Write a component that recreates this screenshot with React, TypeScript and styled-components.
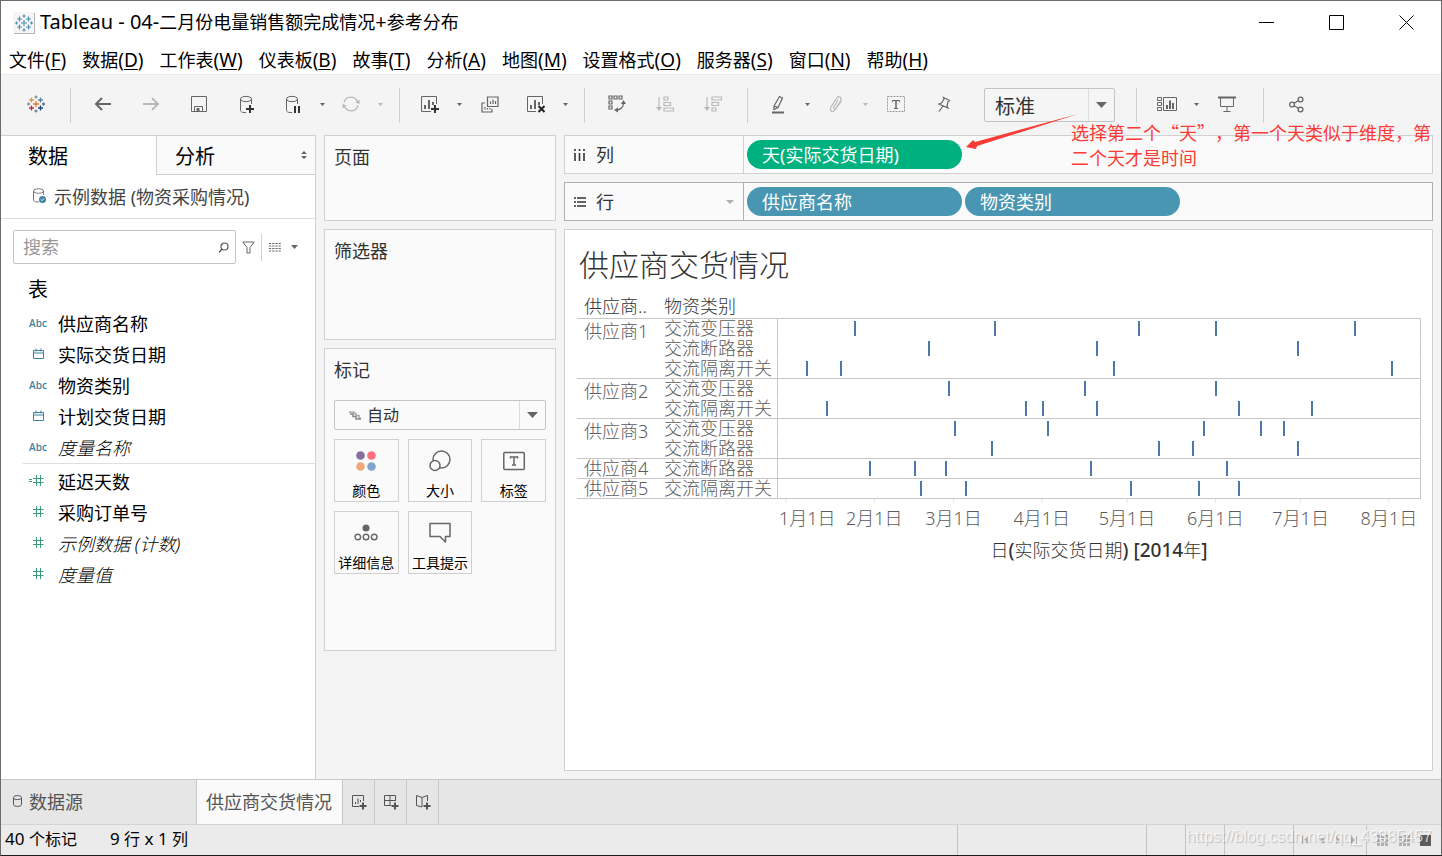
import React from "react";
import styled, { createGlobalStyle, css } from "styled-components";

const uiFont = `"Noto Sans", "Noto Sans CJK SC", sans-serif`;
const cjkFont = `"Noto Sans CJK SC", sans-serif`;
const line = "#d0d0d0";
const ink = "#333333";
const iconInk = "#666666";
const faint = "#b8b8b8";

const Global = createGlobalStyle`
  *, *::before, *::after { box-sizing: border-box; }
  body { margin: 0; background: #f4f4f4; }
  body, button, input, select { font-family: ${uiFont}; font-size: 18px; color: #000; }
  button { border: 0; padding: 0; background: none; }
  svg { display: block; flex: none; }
`;

const Window = styled.div`
  display: flex;
  flex-direction: column;
  min-height: 100vh;
  border: 1px solid #6b6b6b;
  border-bottom-color: #1c1c1c;
  background: #f4f4f4;
`;

const Latin = styled.span<{ $size: number }>`
  font-size: ${(p) => p.$size}px;
`;

/* ---------- title bar and menu ---------- */

const TitleBar = styled.header`
  display: flex;
  align-items: center;
  height: 43px;
  padding-left: 12px;
  background: #fff;
`;

const AppIcon = styled.span`
  display: flex;
  align-items: center;
  justify-content: center;
  width: 21px;
  height: 21px;
  margin-right: 6px;
  background: #f6f6f6;
  box-shadow: 1px 1px 0 #b5b5b5;
`;

const Title = styled.h1`
  flex: 1;
  margin: 0;
  padding-bottom: 2px;
  font-size: 18px;
  font-weight: 400;
  line-height: 24px;
`;

const WindowButton = styled.button`
  display: flex;
  align-items: center;
  justify-content: center;
  width: 70px;
  height: 43px;
`;

const MenuBar = styled.nav`
  display: flex;
  height: 30px;
  background: #fff;
`;

const MenuItem = styled.button`
  padding: 2px 8px 0;
  line-height: 28px;
  white-space: nowrap;
  u { text-underline-offset: 2px; text-decoration-thickness: 1px; }
`;

/* ---------- toolbar ---------- */

const Toolbar = styled.div`
  display: flex;
  align-items: center;
  height: 61px;
  border-top: 1px solid #ececec;
`;

const ToolGroup = styled.div<{ $end?: number; $first?: boolean }>`
  display: flex;
  align-items: center;
  height: 35px;
  padding: 0 ${(p) => p.$end ?? 12}px 0 ${(p) => (p.$first ? 11 : 8)}px;
  border-left: ${(p) => (p.$first ? "0" : "1px solid #cfcfcf")};
`;

const Tool = styled.button<{ $narrow?: boolean; $dim?: boolean }>`
  display: flex;
  align-items: center;
  justify-content: center;
  width: ${(p) => (p.$narrow ? 44 : 48)}px;
  height: 35px;
  padding-bottom: 2px;
  color: ${(p) => (p.$dim ? faint : iconInk)};
`;

const CaretButton = styled.button<{ $dim?: boolean }>`
  display: flex;
  align-items: center;
  justify-content: center;
  width: 14px;
  height: 35px;
  padding-bottom: 2px;
  color: ${(p) => (p.$dim ? faint : iconInk)};
`;

const SelectBox = styled.div<{ $size: "large" | "small" }>`
  display: flex;
  align-items: center;
  position: relative;
  border: 1px solid #c4c4c4;
  border-radius: 2px;
  background: ${(p) => (p.$size === "large" ? "#f5f5f5" : "#fafafa")};
  height: ${(p) => (p.$size === "large" ? 34 : 30)}px;
  ${(p) => p.$size === "large" && css`width: 131px; margin: 0 21px 0 4px;`}
  select {
    flex: 1;
    min-width: 0;
    height: 100%;
    border: 0;
    appearance: none;
    background: none;
    color: ${ink};
    font-size: ${(p) => (p.$size === "large" ? 20 : 16)}px;
    padding: ${(p) => (p.$size === "large" ? "2px 0 0 10px" : "0 0 0 6px")};
  }
`;

const SelectArrow = styled.span`
  display: flex;
  align-items: center;
  justify-content: center;
  width: 26px;
  height: 100%;
  border-left: 1px solid #dcdcdc;
  color: #666;
  pointer-events: none;
`;

/* ---------- data pane ---------- */

const Main = styled.main`
  display: flex;
  flex: 1;
`;

const DataPane = styled.aside`
  width: 315px;
  flex: none;
  background: #fff;
  border-top: 1px solid ${line};
  border-right: 1px solid ${line};
`;

const PaneTabs = styled.div`
  display: flex;
  height: 39px;
`;

const PaneTab = styled.button<{ $active?: boolean }>`
  display: flex;
  align-items: center;
  justify-content: space-between;
  font-size: 20px;
  ${(p) =>
    p.$active
      ? css`width: 155px; padding-left: 27px;`
      : css`
          flex: 1;
          padding: 0 7px 0 18px;
          background: #fafafa;
          border-left: 1px solid ${line};
          border-bottom: 1px solid ${line};
        `}
`;

const Source = styled.div`
  display: flex;
  align-items: center;
  gap: 7px;
  height: 44px;
  padding: 0 0 2px 32px;
  color: #444;
  border-bottom: 1px solid #dedede;
`;

const SearchRow = styled.div`
  display: flex;
  align-items: center;
  margin: 11px 16px 0 12px;
`;

const SearchField = styled.label`
  display: flex;
  align-items: center;
  flex: 1;
  min-width: 0;
  height: 34px;
  padding: 0 6px 0 9px;
  border: 1px solid #c4c4c4;
  border-radius: 2px;
  color: #555;
  input {
    flex: 1;
    min-width: 0;
    border: 0;
    padding: 0;
    outline: 0;
    background: none;
  }
  input::placeholder { color: #979797; opacity: 1; }
`;

const SmallTool = styled.button<{ $divided?: boolean }>`
  display: flex;
  align-items: center;
  justify-content: center;
  gap: 10px;
  flex: none;
  width: ${(p) => (p.$divided ? 38 : 25)}px;
  height: 27px;
  color: #666;
  padding-left: ${(p) => (p.$divided ? 6 : 0)}px;
  border-left: ${(p) => (p.$divided ? `1px solid ${line}` : "0")};
`;

const TablesHeading = styled.h2`
  margin: 12px 0 4px 27px;
  font-size: 20px;
  font-weight: 400;
  line-height: 28px;
`;

const FieldList = styled.ul<{ $measures?: boolean }>`
  list-style: none;
  margin: 0 0 0 22px;
  padding: ${(p) => (p.$measures ? "2px 0 0" : "0")};
  border-top: ${(p) => (p.$measures ? "1px solid #dedede" : "0")};
`;

const Field = styled.li<{ $italic?: boolean }>`
  display: flex;
  align-items: center;
  height: 31px;
  padding-bottom: 2px;
  font-style: ${(p) => (p.$italic ? "italic" : "normal")};
  font-weight: ${(p) => (p.$italic ? 300 : 400)};
`;

const FieldIcon = styled.span`
  display: flex;
  justify-content: center;
  width: 30px;
  margin-right: 5px;
  font: 600 10px "Open Sans", "Noto Sans", sans-serif;
  color: #3e82a0;
`;

/* ---------- cards ---------- */

const Cards = styled.section`
  display: flex;
  flex-direction: column;
  gap: 8px;
  width: 232px;
  flex: none;
  margin-left: 8px;
`;

const Card = styled.div<{ $height: number }>`
  min-height: ${(p) => p.$height}px;
  padding: 9px;
  border: 1px solid ${line};
  background: #fafafa;
`;

const CardTitle = styled.h2`
  margin: 0;
  font-size: 18px;
  font-weight: 400;
  line-height: 24px;
  color: ${ink};
`;

const MarkType = styled.div`
  margin: 18px 0 9px;
`;

const MarkGlyph = styled.span`
  margin-left: 14px;
`;

const MarkGrid = styled.div`
  display: grid;
  grid-template-columns: repeat(3, 1fr);
  gap: 9px;
`;

const MarkButton = styled.button`
  display: flex;
  flex-direction: column;
  align-items: center;
  height: 63px;
  padding-top: 9px;
  border: 1px solid ${line};
  font-size: 14px;
  line-height: 20px;
  white-space: nowrap;
  svg { margin-bottom: 8px; }
`;

/* ---------- shelves ---------- */

const Workspace = styled.section`
  position: relative;
  display: flex;
  flex-direction: column;
  gap: 8px;
  flex: 1;
  min-width: 0;
  margin: 0 8px;
`;

const Shelf = styled.div<{ $strong?: boolean }>`
  --edge: ${(p) => (p.$strong ? "#b0b0b0" : line)};
  display: flex;
  align-items: center;
  gap: 3px;
  height: 39px;
  border: 1px solid var(--edge);
  background: #fafafa;
`;

const ShelfLabel = styled.div`
  display: flex;
  align-items: center;
  gap: 10px;
  width: 179px;
  height: 37px;
  padding: 0 9px 0 8px;
  border-right: 1px solid var(--edge);
  color: ${ink};
  span { flex: 1; line-height: 24px; }
`;

const Pill = styled.button<{ $tone: "date" | "dimension" }>`
  width: 215px;
  height: 29px;
  padding-left: 15px;
  border-radius: 15px;
  text-align: left;
  line-height: 28px;
  color: #fff;
  background: ${(p) => (p.$tone === "date" ? "#00b180" : "#4996b2")};
`;

const Note = styled.div`
  position: absolute;
  left: 402px;
  right: 0;
  top: -23px;
  display: flex;
  svg { overflow: visible; }
`;

const NoteText = styled.p`
  margin: 8px 0 0;
  font-family: ${cjkFont};
  line-height: 25px;
  white-space: nowrap;
  text-spacing-trim: space-all;
  color: #fb3b35;
`;

/* ---------- view ---------- */

const View = styled.div`
  flex: 1;
  margin-bottom: 8px;
  padding: 12px 11px 12px 12px;
  border: 1px solid ${line};
  background: #fff;
`;

const ViewTitle = styled.h2`
  margin: 0 0 11px 2px;
  font-family: ${cjkFont};
  font-size: 30px;
  font-weight: 300;
  line-height: 42px;
  color: ${ink};
`;

const Grid = styled.table`
  width: 100%;
  table-layout: fixed;
  border-collapse: separate;
  border-spacing: 0;
  font-family: ${uiFont};
  font-weight: 300;
  line-height: 19px;
  white-space: nowrap;
  color: #5c5c5c;
  th, td { padding: 0; font-weight: 300; text-align: left; }
  thead th { height: 23px; padding-left: 7px; color: ${ink}; }
  tbody th, tbody td { border-top: 1px solid transparent; height: 20px; }
  tbody th { padding-left: 7px; }
  tbody tr:first-child th, tbody tr:first-child td { border-top-color: #c8c8c8; }
  tbody:last-of-type tr:last-child > * { border-bottom: 1px solid #c8c8c8; }
  tbody:last-of-type th { height: 21px; }
`;

const Supplier = styled.th<{ $group: boolean }>`
  vertical-align: top;
  line-height: ${(p) => (p.$group ? 25 : 19)}px;
`;

const Track = styled.td`
  border-left: 1px solid #c8c8c8;
  border-right: 1px solid #c8c8c8;
`;

const Axis = styled.svg`
  overflow: visible;
  text {
    font-family: ${uiFont};
    font-size: 18px;
    font-weight: 300;
    fill: #5c5c5c;
  }
`;

const AxisTitle = styled.div`
  text-align: center;
  line-height: 26px;
  font-weight: 300;
  color: ${ink};
  b { font-size: 19px; font-weight: 500; }
`;

/* ---------- bottom bars ---------- */

const SheetBar = styled.div`
  display: flex;
  height: 45px;
  border-top: 1px solid #c8c8c8;
  background: #e6e6e6;
`;

const SheetTab = styled.button<{ $kind: "source" | "active" | "new" }>`
  display: flex;
  align-items: center;
  gap: 7px;
  padding-bottom: 2px;
  border-right: 1px solid #c8c8c8;
  color: #555;
  ${(p) => p.$kind === "source" && css`width: 196px; padding-left: 12px;`}
  ${(p) => p.$kind === "active" && css`padding: 0 10px 2px 9px; background: #fafafa;`}
  ${(p) => p.$kind === "new" && css`width: 32px; padding: 0; justify-content: center;`}
`;

const StatusBar = styled.footer`
  position: relative;
  display: flex;
  align-items: center;
  gap: 33px;
  height: 31px;
  padding-left: 4px;
  border-top: 1px solid #d4d4d4;
  background: #ebebeb;
  font-size: 16px;
  line-height: 30px;
`;

const StatusText = styled.span`
  height: 30px;
  line-height: 28px;
`;

const StatusCells = styled.div`
  display: flex;
  height: 30px;
  margin-left: auto;
`;

const StatusCell = styled.div<{ $width: number }>`
  display: flex;
  align-items: center;
  justify-content: space-evenly;
  width: ${(p) => p.$width}px;
  border-left: 1px solid #c4c4c4;
  color: #b0b0b0;
`;

const Watermark = styled.span`
  position: absolute;
  right: 9px;
  top: 2px;
  font-family: "Liberation Sans", sans-serif;
  line-height: 20px;
  color: rgba(255, 255, 255, 0.7);
  text-shadow: 1px 1px 1px rgba(0, 0, 0, 0.2);
`;

/* ---------- icons ---------- */

const Svg = ({ w, h, children, sw = 1.5 }: { w: number; h: number; sw?: number; children: React.ReactNode }) => (
  <svg width={w} height={h} viewBox={`0 0 ${w} ${h}`} fill="none" stroke="currentColor" strokeWidth={sw} aria-hidden="true">
    {children}
  </svg>
);

const Caret = ({ size = 5 }: { size?: number }) => (
  <svg width={size} height={Math.ceil(size / 2)} viewBox="0 0 10 6" preserveAspectRatio="none" fill="currentColor" aria-hidden="true">
    <path d="M0 0h10L5 6z" />
  </svg>
);

const crosses: [number, number, number, string][] = [
  [9, 9, 3, "#e8762d"],
  [4.5, 5, 2.5, "#e8963d"],
  [13.5, 5, 2.5, "#5b879b"],
  [4.5, 13, 2.5, "#c1283c"],
  [13.5, 13, 2.5, "#1f447e"],
  [9, 2, 1.5, "#7199a6"],
  [9, 16, 1.5, "#6b7fa3"],
  [1.5, 9, 1.5, "#7199a6"],
  [16.5, 9, 1.5, "#5b6591"],
];

const Logo = ({ mono }: { mono?: boolean }) => (
  <svg width="18" height="18" viewBox="0 0 18 18" strokeWidth={mono ? 1.2 : 1.3} aria-hidden="true">
    {crosses.map(([x, y, r, c]) => (
      <path key={`${x}-${y}`} d={`M${x - r} ${y}h${2 * r}M${x} ${y - r}v${2 * r}`} stroke={mono ? "#4b8fb3" : c} />
    ))}
  </svg>
);

const Plus = ({ x, y }: { x: number; y: number }) => (
  <path d={`M${x - 4} ${y}h8M${x} ${y - 4}v8`} stroke="#333" strokeWidth="2" />
);

const Cylinder = () => (
  <path d="M7 17.500H5c-2 0-3.500-1-3.500-2V4M12.500 4v5M1.500 4c0-3.500 11-3.500 11 0s-11 3.500-11 0z" />
);

const icons = {
  back: <Svg w={18} h={14} sw={2}><path d="M17 7H2M8 1L2 7l6 6" /></Svg>,
  forward: <Svg w={18} h={14} sw={1.8}><path d="M1 7h15M10 1l6 6-6 6" /></Svg>,
  save: <Svg w={16} h={16} sw={1}><path d="M.5.5h15v15H.5zM3.500 15v-4.500h8V15" /><path d="M5.500 12h3v3h-3z" fill="currentColor" stroke="none" /></Svg>,
  addData: <Svg w={16} h={19} sw={1}><Cylinder /><Plus x={11} y={14} /></Svg>,
  pauseData: <Svg w={16} h={19} sw={1}><Cylinder /><path d="M10 11v7M14 11v7" stroke="#333" strokeWidth="2" /></Svg>,
  refresh: <Svg w={18} h={16} sw={1.2}><path d="M2 6.500C4-.5 13-.5 15.500 6M16 9.500c-2 7-11 7-13.500.5" /><path d="M17.500 3.500V8l-4-1.500zM.5 12.500V8l4 1.500z" fill="currentColor" stroke="none" /></Svg>,
  newSheet: <Svg w={20} h={18} sw={1}><path d="M16.500 9V1.500H1.500v15H11" /><path d="M5 14v-4M9 14V5M13 10V7" strokeWidth="2" /><Plus x={15} y={14} /></Svg>,
  duplicate: <Svg w={18} h={17} sw={1.2}><path d="M6.500 1h10.500v9.500H6.500zM4 7H1v9h10v-3M9.500 8V5.500M12 8V3.500M14.500 8V5M4 13.500V11M6.500 13.500V12M9 13.500V12" /></Svg>,
  clearSheet: <Svg w={20} h={18} sw={1}><path d="M16.500 9V1.500H1.500v15H10" /><path d="M5 14v-4M9 14V5M13 10V7" strokeWidth="2" /><path d="M12.500 11l6 6M18.500 11l-6 6" stroke="#222" strokeWidth="2" /></Svg>,
  swap: <Svg w={18} h={18} sw={1.2}><path d="M1 1h3v3H1zM6 1h3v3H6zM11 1h3v3h-3zM1 6h3v3H1zM1 11h3v3H1zM15.500 8c0 4-3 7-7 7" /><path d="M13 9l2.500-4L18 9zM10 12.500L6 15l4 2.500z" fill="currentColor" stroke="none" /></Svg>,
  sortAsc: <Svg w={18} h={16} sw={1.2}><path d="M3 1v11M8 1h4v3H8zM8 6.500h6.500v3H8zM8 12h9.500v3H8z" /><path d="M0 11h6l-3 4z" fill="currentColor" stroke="none" /></Svg>,
  sortDesc: <Svg w={18} h={16} sw={1.2}><path d="M3 1v11M8 1h9.500v3H8zM8 6.500h6.500v3H8zM8 12h4v3H8z" /><path d="M0 11h6l-3 4z" fill="currentColor" stroke="none" /></Svg>,
  highlight: <Svg w={14} h={19} sw={1.2}><path d="M3 11L8.500 1.500l3 1.500-4.500 9.500L3 14.500zM3 11l4 1.500" /><path d="M1 17.500h12" strokeWidth="2" /></Svg>,
  clip: <Svg w={14} h={18} sw={1.2}><path d="M9 5l-4 7c-1 2 1 3 2 1.500L11.500 6c2-4-2-6-4-2.500L2 12c-2 4 2 6 4 3L12.500 6" /></Svg>,
  label: <Svg w={18} h={16} sw={1}><path d="M.5.5h17v15H.5z" stroke="#999" strokeDasharray="2 1" /><path d="M5.500 6V4.500h7V6M7 12.500h4" /><path d="M9 4.500v8" strokeWidth="1.500" /></Svg>,
  pin: <Svg w={14} h={17} sw={1.2}><path d="M6.500 1.500l6 3-1.500 1-1 4.500 1 2L2 8l2.500-1L7 3zM6 10l-4 5.500" /></Svg>,
  showMe: <Svg w={20} h={15} sw={1}><path d="M.5.5h4v3h-4zM.5 5.500h4v3h-4zM.5 10.500h4v3h-4zM6.500.5h13v13h-13z" /><path d="M10 12V8M13 12V3.500M16 12V6" strokeWidth="2" /></Svg>,
  present: <Svg w={18} h={16} sw={1}><path d="M0 1.500h18" strokeWidth="2" /><path d="M2.500 2v8.500h13V2M9 10.500v4.500M5.500 15.500h7" /></Svg>,
  share: <Svg w={15} h={17} sw={1.3}><circle cx="3" cy="8.500" r="2.400" /><circle cx="11.500" cy="3.500" r="2.400" /><circle cx="11.500" cy="13.500" r="2.400" /><path d="M5.200 7.200l4-2.400M5.200 9.800l4 2.400" /></Svg>,
};

const calendar = <Svg w={11} h={11} sw={1}><path d="M.5 2.500h10v8H.5zM.5 5h10M3 .5v3M8 .5v3" /></Svg>;
const hash = (calc?: boolean) => (
  <svg width="18" height="11" viewBox="0 0 18 11" stroke="#3c9c78" fill="none" aria-hidden="true">
    <path d="M7.500 0v11M11.500 0v11M4 3.500h10.500M4 7.500h10.500" />
    {calc && <path d="M0 4.500h3M0 6.500h3" />}
  </svg>
);

/* ---------- data ---------- */

const menus = [
  ["文件", "F"], ["数据", "D"], ["工作表", "W"], ["仪表板", "B"], ["故事", "T"], ["分析", "A"],
  ["地图", "M"], ["设置格式", "O"], ["服务器", "S"], ["窗口", "N"], ["帮助", "H"],
];

const dimensions = [
  { name: "供应商名称", icon: "Abc" },
  { name: "实际交货日期", icon: calendar },
  { name: "物资类别", icon: "Abc" },
  { name: "计划交货日期", icon: calendar },
  { name: "度量名称", icon: "Abc", italic: true },
];

const measures = [
  { name: "延迟天数", icon: hash(true) },
  { name: "采购订单号", icon: hash() },
  { name: "示例数据 (计数)", icon: hash(), italic: true },
  { name: "度量值", icon: hash(), italic: true },
];

const span = 642;
const pct = (v: number) => `${(v / span) * 100}%`;

const suppliers = [
  {
    name: "供应商1",
    rows: [
      { category: "交流变压器", marks: [77, 217, 361, 438, 577] },
      { category: "交流断路器", marks: [151, 319, 520] },
      { category: "交流隔离开关", marks: [29, 63, 336, 614] },
    ],
  },
  {
    name: "供应商2",
    rows: [
      { category: "交流变压器", marks: [171, 307, 438] },
      { category: "交流隔离开关", marks: [49, 248, 265, 319, 461, 534] },
    ],
  },
  {
    name: "供应商3",
    rows: [
      { category: "交流变压器", marks: [177, 270, 426, 483, 506] },
      { category: "交流断路器", marks: [214, 381, 415, 520] },
    ],
  },
  { name: "供应商4", rows: [{ category: "交流断路器", marks: [92, 137, 168, 313, 449] }] },
  { name: "供应商5", rows: [{ category: "交流隔离开关", marks: [143, 188, 353, 421, 461] }] },
];

const ticks = [9, 97, 176, 264, 349, 437, 522, 610];

/* ---------- parts ---------- */

const DropTool = ({ label, icon, dim }: { label: string; icon: React.ReactNode; dim?: boolean }) => (
  <>
    <Tool $narrow $dim={dim} aria-label={label}>{icon}</Tool>
    <CaretButton $dim={dim} aria-label={`${label}选项`}><Caret /></CaretButton>
  </>
);

const Chart = () => (
  <Grid>
    <colgroup>
      <col style={{ width: 80 }} />
      <col style={{ width: 120 }} />
      <col />
    </colgroup>
    <thead>
      <tr><th>供应商..</th><th>物资类别</th><th /></tr>
    </thead>
    {suppliers.map((s) => (
      <tbody key={s.name}>
        {s.rows.map((r, i) => (
          <tr key={r.category}>
            {i === 0 && <Supplier scope="rowgroup" rowSpan={s.rows.length} $group={s.rows.length > 1}>{s.name}</Supplier>}
            <th scope="row">{r.category}</th>
            <Track>
              <svg width="100%" height="19" aria-hidden="true">
                {r.marks.map((m) => <rect key={m} x={pct(m - 1)} y="2" width="2" height="15" fill="#4e79a7" shapeRendering="crispEdges" />)}
              </svg>
            </Track>
          </tr>
        ))}
      </tbody>
    ))}
    <tfoot>
      <tr>
        <td colSpan={2} />
        <td>
          <Axis width="100%" height="38">
            {ticks.map((t, i) => (
              <g key={t}>
                <line x1={pct(t)} x2={pct(t)} y1="0" y2="4" stroke="#e6e6e6" />
                <text x={i ? pct(t) : 2} y="26" textAnchor={i ? "middle" : "start"}>{i + 1}月1日</text>
              </g>
            ))}
          </Axis>
          <AxisTitle>日<b>(</b>实际交货日期<b>) [2014</b>年<b>]</b></AxisTitle>
        </td>
      </tr>
    </tfoot>
  </Grid>
);

export default function App() {
  return (
    <Window lang="zh-CN">
      <Global />
      <TitleBar>
        <AppIcon><Logo mono /></AppIcon>
        <Title><Latin $size={20}>Tableau - 04-</Latin>二月份电量销售额完成情况<Latin $size={20}>+</Latin>参考分布</Title>
        <WindowButton aria-label="最小化"><Svg w={15} h={15} sw={1}><path d="M0 7.500h15" /></Svg></WindowButton>
        <WindowButton aria-label="最大化"><Svg w={15} h={15} sw={1}><path d="M.5.5h14v14H.5z" /></Svg></WindowButton>
        <WindowButton aria-label="关闭"><Svg w={15} h={15} sw={1}><path d="M.5.5l14 14M14.500.5l-14 14" /></Svg></WindowButton>
      </TitleBar>
      <MenuBar>
        {menus.map(([name, key]) => <MenuItem key={key}>{name}<Latin $size={19}>(<u>{key}</u>)</Latin></MenuItem>)}
      </MenuBar>

      <Toolbar>
        <ToolGroup $first $end={10}><Tool aria-label="开始页面"><Logo /></Tool></ToolGroup>
        <ToolGroup>
          <Tool aria-label="撤消">{icons.back}</Tool>
          <Tool aria-label="重做" $dim>{icons.forward}</Tool>
          <Tool aria-label="保存">{icons.save}</Tool>
          <Tool aria-label="新建数据源">{icons.addData}</Tool>
          <DropTool label="暂停自动更新" icon={icons.pauseData} />
          <DropTool label="运行更新" icon={icons.refresh} dim />
        </ToolGroup>
        <ToolGroup>
          <DropTool label="新建工作表" icon={icons.newSheet} />
          <Tool aria-label="复制">{icons.duplicate}</Tool>
          <DropTool label="清除工作表" icon={icons.clearSheet} />
        </ToolGroup>
        <ToolGroup $end={10}>
          <Tool aria-label="交换行和列">{icons.swap}</Tool>
          <Tool aria-label="升序" $dim>{icons.sortAsc}</Tool>
          <Tool aria-label="降序" $dim>{icons.sortDesc}</Tool>
        </ToolGroup>
        <ToolGroup>
          <DropTool label="突出显示" icon={icons.highlight} />
          <DropTool label="组成员" icon={icons.clip} dim />
          <Tool aria-label="显示标记标签">{icons.label}</Tool>
          <Tool aria-label="固定轴">{icons.pin}</Tool>
        </ToolGroup>
        <SelectBox $size="large">
          <select aria-label="适合" defaultValue="标准"><option>标准</option></select>
          <SelectArrow><Caret size={11} /></SelectArrow>
        </SelectBox>
        <ToolGroup>
          <DropTool label="显示卡" icon={icons.showMe} />
          <Tool aria-label="演示模式">{icons.present}</Tool>
        </ToolGroup>
        <ToolGroup><Tool aria-label="共享">{icons.share}</Tool></ToolGroup>
      </Toolbar>

      <Main>
        <DataPane>
          <PaneTabs>
            <PaneTab $active>数据</PaneTab>
            <PaneTab>
              分析
              <svg width="8" height="8" viewBox="0 0 8 8" fill="#666" aria-hidden="true"><path d="M4 0l3 3H1zM4 8L1 5h6z" /></svg>
            </PaneTab>
          </PaneTabs>
          <Source>
            <svg width="14" height="16" viewBox="0 0 14 16" fill="none" stroke="#777" aria-hidden="true">
              <path d="M6 14H4c-2 0-3.500-1-3.500-2V3M10.500 3v4M.5 3C.5 0 10.500 0 10.500 3S.5 6 .5 3z" />
              <circle cx="9.500" cy="11.500" r="3.500" fill="#3e82a0" stroke="none" />
              <path d="M8 11.500l1 1.200 2-2.200" stroke="#fff" />
            </svg>
            示例数据 (物资采购情况)
          </Source>
          <SearchRow>
            <SearchField>
              <input type="text" placeholder="搜索" aria-label="搜索" />
              <Svg w={11} h={11} sw={1.2}><circle cx="6.500" cy="4.500" r="3.500" /><path d="M4 7L1 10.500" /></Svg>
            </SearchField>
            <SmallTool aria-label="筛选"><Svg w={13} h={13} sw={1}><path d="M.8 1h11.400L8 6.500V12H5V6.500z" /></Svg></SmallTool>
            <SmallTool $divided aria-label="视图选项">
              <Svg w={12} h={9} sw={1}><path d="M0 .5h12M0 3h12M0 5.500h12M0 8h12" strokeDasharray="2.200 1" /></Svg>
              <Caret size={7} />
            </SmallTool>
          </SearchRow>
          <TablesHeading>表</TablesHeading>
          <FieldList>
            {dimensions.map((f) => <Field key={f.name} $italic={f.italic}><FieldIcon>{f.icon}</FieldIcon>{f.name}</Field>)}
          </FieldList>
          <FieldList $measures>
            {measures.map((f) => <Field key={f.name} $italic={f.italic}><FieldIcon>{f.icon}</FieldIcon>{f.name}</Field>)}
          </FieldList>
        </DataPane>

        <Cards>
          <Card $height={86}><CardTitle>页面</CardTitle></Card>
          <Card $height={111}><CardTitle>筛选器</CardTitle></Card>
          <Card $height={303}>
            <CardTitle>标记</CardTitle>
            <MarkType>
              <SelectBox $size="small">
                <MarkGlyph>
                  <Svg w={12} h={9} sw={1}>
                    <path d="M0 1h5v1.500h2v2h3V7h2" strokeWidth="1.500" stroke="#aaa" />
                    <path d="M1 3h3v2.500h3V8h5" strokeWidth="1.500" stroke="#888" />
                  </Svg>
                </MarkGlyph>
                <select aria-label="标记类型" defaultValue="自动"><option>自动</option></select>
                <SelectArrow><Caret size={11} /></SelectArrow>
              </SelectBox>
            </MarkType>
            <MarkGrid>
              <MarkButton>
                <svg width="24" height="24" viewBox="0 0 24 24" aria-hidden="true">
                  <circle cx="6.500" cy="6.500" r="4.300" fill="#84709b" /><circle cx="17.500" cy="6.500" r="4.300" fill="#fc7180" />
                  <circle cx="6.500" cy="17.500" r="4.300" fill="#f1a77d" /><circle cx="17.500" cy="17.500" r="4.300" fill="#81a4cd" />
                </svg>
                颜色
              </MarkButton>
              <MarkButton>
                <svg width="24" height="24" viewBox="0 0 24 24" fill="#fafafa" stroke="#666" strokeWidth="1.500" aria-hidden="true">
                  <circle cx="13.500" cy="10.500" r="8.500" /><circle cx="7" cy="16.500" r="5" />
                </svg>
                大小
              </MarkButton>
              <MarkButton>
                <svg width="24" height="24" viewBox="0 0 24 24" fill="none" stroke="#666" strokeWidth="1.500" aria-hidden="true">
                  <rect x="1.800" y="3.500" width="20.500" height="17" rx="1" /><path d="M8.500 9.500V8h7v1.500M12 8v8M10 16h4" />
                </svg>
                标签
              </MarkButton>
              <MarkButton>
                <svg width="24" height="24" viewBox="0 0 24 24" fill="none" stroke="#666" strokeWidth="1.400" aria-hidden="true">
                  <circle cx="12" cy="7" r="3.500" fill="#666" stroke="none" />
                  <circle cx="3.800" cy="16" r="2.800" /><circle cx="12" cy="16" r="2.800" /><circle cx="20.200" cy="16" r="2.800" />
                </svg>
                详细信息
              </MarkButton>
              <MarkButton>
                <svg width="24" height="24" viewBox="0 0 24 24" fill="none" stroke="#666" strokeWidth="1.500" aria-hidden="true">
                  <path d="M2 2.500h20v13h-4.500V21L12 15.500H2z" strokeLinejoin="round" />
                </svg>
                工具提示
              </MarkButton>
            </MarkGrid>
          </Card>
        </Cards>

        <Workspace>
          <Shelf>
            <ShelfLabel>
              <Svg w={13} h={12} sw={1.6}><path d="M2 0v2M2 4v8M6.500 0v2M6.500 4v8M11 0v2M11 4v8" /></Svg>
              <span>列</span>
            </ShelfLabel>
            <Pill $tone="date">天(实际交货日期)</Pill>
          </Shelf>
          <Shelf $strong>
            <ShelfLabel>
              <Svg w={13} h={12} sw={1.6}><path d="M1 2h2M4 2h9M1 6h2M4 6h9M1 10h2M4 10h9" /></Svg>
              <span>行</span>
              <svg width="8" height="4" viewBox="0 0 8 4" fill="#b0b0b0" aria-hidden="true"><path d="M0 0h8L4 4z" /></svg>
            </ShelfLabel>
            <Pill $tone="dimension">供应商名称</Pill>
            <Pill $tone="dimension">物资类别</Pill>
          </Shelf>
          <View>
            <ViewTitle>供应商交货情况</ViewTitle>
            <Chart />
          </View>
          <Note>
            <svg width="105" height="38" viewBox="0 0 105 38" fill="#fb3b35" aria-hidden="true">
              <path d="M112 2L11 34l-1 3L0 35l7-7 2 2z" />
            </svg>
            <NoteText>选择第二个“天”，第一个天类似于维度，第<br />二个天才是时间</NoteText>
          </Note>
        </Workspace>
      </Main>

      <SheetBar>
        <SheetTab $kind="source">
          <Svg w={9} h={12} sw={1}><path d="M.5 2.500v7c0 2.500 8 2.500 8 0v-7C8.500 0 .5 0 .5 2.500zM.5 3c0 2 8 2 8 0" /></Svg>
          数据源
        </SheetTab>
        <SheetTab $kind="active">供应商交货情况</SheetTab>
        <SheetTab $kind="new" aria-label="新建工作表">
          <Svg w={16} h={16} sw={1}><path d="M12.500 7V1.500h-11v11H8M4.500 10V8M7 10V4.500M9.500 8V6" /><path d="M8.500 12h7M12 8.500v7" strokeWidth="2" /></Svg>
        </SheetTab>
        <SheetTab $kind="new" aria-label="新建仪表板">
          <Svg w={16} h={16} sw={1}><path d="M12.500 7V1.500h-11v10H8M1.500 6.500h11M7 1.500v10" /><path d="M8.500 12h7M12 8.500v7" strokeWidth="2" /></Svg>
        </SheetTab>
        <SheetTab $kind="new" aria-label="新建故事">
          <Svg w={16} h={16} sw={1}><path d="M12.500 7V1.500L7 3.500l-5.500-2v10L7 13M7 3.500V13" /><path d="M8.500 12h7M12 8.500v7" strokeWidth="2" /></Svg>
        </SheetTab>
      </SheetBar>
      <StatusBar>
        <StatusText><Latin $size={17}>40 </Latin>个标记</StatusText>
        <StatusText><Latin $size={17}>9 </Latin>行<Latin $size={17}> x 1 </Latin>列</StatusText>
        <StatusCells>
          <StatusCell $width={189} />
          <StatusCell $width={39} />
          <StatusCell $width={39} />
          <StatusCell $width={69} />
          <StatusCell $width={73}>
            <svg width="56" height="8" viewBox="0 0 56 8" fill="currentColor" aria-hidden="true">
              <path d="M0 0h1v8H0zM6 0v8L2 4zM22 0v8l-4-4zM34 0v8l4-4zM49 0v8l4-4zM54 0h1v8h-1z" />
            </svg>
          </StatusCell>
          <StatusCell $width={75}>
            <svg width="12" height="11" viewBox="0 0 12 11" stroke="currentColor" strokeWidth="3" strokeDasharray="3 1" aria-hidden="true"><path d="M0 1.500h12M0 5.500h12M0 9.500h12" /></svg>
            <svg width="12" height="11" viewBox="0 0 12 11" stroke="currentColor" strokeWidth="3" strokeDasharray="3 1" aria-hidden="true"><path d="M0 1.500h12M0 5.500h12M0 9.500h12" /></svg>
            <svg width="11" height="11" viewBox="0 0 11 11" aria-hidden="true"><path d="M0 0h11v11H0z" fill="#5c5c5c" /></svg>
          </StatusCell>
        </StatusCells>
        <Watermark>https://blog.csdn.net/qq_43385457</Watermark>
      </StatusBar>
    </Window>
  );
}
